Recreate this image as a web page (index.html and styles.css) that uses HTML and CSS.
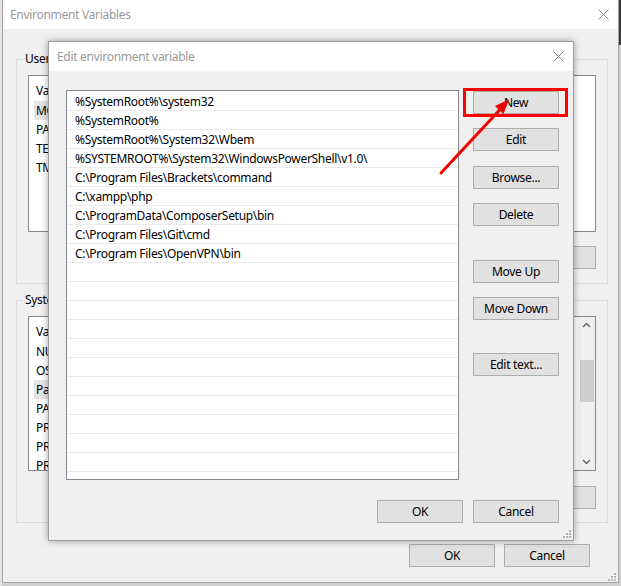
FILE: index.html
```html
<!DOCTYPE html>
<html lang="en">
<head>
<meta charset="utf-8">
<title>Edit environment variable</title>
<link rel="stylesheet" href="styles.css">
</head>
<body>
<div class="desktop">
  <div class="win env">
    <div class="titlebar">
      <span class="title">Environment Variables</span>
      <svg class="close" width="11" height="11" viewBox="0 0 11 11"><path d="M0.5 0.5 L10.5 10.5 M10.5 0.5 L0.5 10.5" stroke="#8a8a8a" stroke-width="1" fill="none"/></svg>
    </div>
    <div class="env-body">
      <fieldset class="group">
        <legend>User variables for admin</legend>
        <div class="vlist user">
          <div class="vhead">Variable</div>
          <div class="vrow sel">MOZ_PLUGIN_PATH</div>
          <div class="vrow">PATH</div>
          <div class="vrow">TEMP</div>
          <div class="vrow">TMP</div>
        </div>
        <div class="btnrow">
          <button class="btn">New...</button>
          <button class="btn">Edit...</button>
          <button class="btn">Delete</button>
        </div>
      </fieldset>
      <fieldset class="group sys">
        <legend>System variables</legend>
        <div class="vlist system">
          <div class="vcontent">
            <div class="vhead">Variable</div>
            <div class="vrow">NUMBER_OF_PROCESSORS</div>
            <div class="vrow">OS</div>
            <div class="vrow sel">Path</div>
            <div class="vrow">PATHEXT</div>
            <div class="vrow">PROCESSOR_ARCHITECTURE</div>
            <div class="vrow">PROCESSOR_IDENTIFIER</div>
            <div class="vrow">PROCESSOR_LEVEL</div>
          </div>
          <div class="scrollbar">
            <svg width="17" height="17" viewBox="0 0 17 17"><path d="M5 10 L8.5 6.5 L12 10" stroke="#606060" stroke-width="1.3" fill="none"/></svg>
            <div class="track"><div class="thumb"></div></div>
            <svg width="17" height="17" viewBox="0 0 17 17"><path d="M5 7 L8.5 10.5 L12 7" stroke="#606060" stroke-width="1.3" fill="none"/></svg>
          </div>
        </div>
        <div class="btnrow sysbtns">
          <button class="btn">New...</button>
          <button class="btn">Edit...</button>
          <button class="btn">Delete</button>
        </div>
      </fieldset>
      <div class="btnrow mainbtns">
        <button class="btn">OK</button>
        <button class="btn">Cancel</button>
      </div>
    </div>
    <svg class="grip env-grip" width="9" height="9" viewBox="0 0 9 9"><g fill="#b4b4b4"><rect x="7" y="1" width="2" height="2"/><rect x="4" y="4" width="2" height="2"/><rect x="7" y="4" width="2" height="2"/><rect x="1" y="7" width="2" height="2"/><rect x="4" y="7" width="2" height="2"/><rect x="7" y="7" width="2" height="2"/></g></svg>
  </div>

  <div class="win dlg">
    <div class="titlebar dlg-title">
      <span class="title">Edit environment variable</span>
      <svg class="close" width="11" height="11" viewBox="0 0 11 11"><path d="M0.5 0.5 L10.5 10.5 M10.5 0.5 L0.5 10.5" stroke="#8a8a8a" stroke-width="1" fill="none"/></svg>
    </div>
    <div class="dlg-body">
      <div class="plist">
        <div class="prow">%SystemRoot%\system32</div>
        <div class="prow">%SystemRoot%</div>
        <div class="prow">%SystemRoot%\System32\Wbem</div>
        <div class="prow">%SYSTEMROOT%\System32\WindowsPowerShell\v1.0\</div>
        <div class="prow">C:\Program Files\Brackets\command</div>
        <div class="prow">C:\xampp\php</div>
        <div class="prow">C:\ProgramData\ComposerSetup\bin</div>
        <div class="prow">C:\Program Files\Git\cmd</div>
        <div class="prow">C:\Program Files\OpenVPN\bin</div>
        <div class="prow"></div>
        <div class="prow"></div>
        <div class="prow"></div>
        <div class="prow"></div>
        <div class="prow"></div>
        <div class="prow"></div>
        <div class="prow"></div>
        <div class="prow"></div>
        <div class="prow"></div>
        <div class="prow"></div>
        <div class="prow"></div>
      </div>
      <div class="side">
        <button class="btn first">New</button>
        <button class="btn">Edit</button>
        <button class="btn g15">Browse...</button>
        <button class="btn">Delete</button>
        <button class="btn g34">Move Up</button>
        <button class="btn">Move Down</button>
        <button class="btn g33">Edit text...</button>
      </div>
      <div class="footer">
        <button class="btn">OK</button>
        <button class="btn">Cancel</button>
      </div>
    </div>
    <svg class="grip dlg-grip" width="9" height="9" viewBox="0 0 9 9"><g fill="#b4b4b4"><rect x="7" y="1" width="2" height="2"/><rect x="4" y="4" width="2" height="2"/><rect x="7" y="4" width="2" height="2"/><rect x="1" y="7" width="2" height="2"/><rect x="4" y="7" width="2" height="2"/><rect x="7" y="7" width="2" height="2"/></g></svg>
  </div>

  <svg class="annot" width="621" height="586" viewBox="0 0 621 586">
    <rect x="464.5" y="89.5" width="102" height="26" fill="none" stroke="#ff0000" stroke-width="3"/>
    <line x1="441" y1="173" x2="501" y2="108.5" stroke="#f00000" stroke-width="3" stroke-linecap="round"/>
    <polygon points="509,99.5 503.5,114 495,106" fill="#f00000"/>
  </svg>
</div>
</body>
</html>
```
FILE: styles.css
```css
* { box-sizing: border-box; }

html, body {
  margin: 0;
  padding: 0;
}

body {
  width: 621px;
  height: 586px;
  overflow: hidden;
  background: linear-gradient(to bottom, #3a3a3a 0, #3a3a3a 45px, #cfcfcf 45px);
  font-family: "Noto Sans", "Segoe UI", sans-serif;
  font-size: 12px;
  letter-spacing: -0.3px;
  color: #000;
}

.desktop {
  position: relative;
  width: 621px;
  height: 586px;
  background: linear-gradient(to right, #e4e4e4 0, #e4e4e4 2px, transparent 2px);
}

.win {
  position: absolute;
  background: #f0f0f0;
  border: 1px solid #a3a3a3;
  display: flex;
  flex-direction: column;
}

.env {
  left: 2px;
  top: -1px;
  width: 617px;
  height: 584px;
}

.titlebar {
  height: 29px;
  flex: none;
  background: #fff;
  display: flex;
  align-items: center;
  justify-content: space-between;
  padding: 0 9px 0 7px;
}

.title {
  color: #999;
  font-size: 12px;
  line-height: 16px;
}

.close { display: block; }

.env-body {
  padding: 22px 10px 0 13px;
  display: flex;
  flex-direction: column;
}

.group {
  margin: 0;
  min-width: 0;
  border: 1px solid #dcdcdc;
  padding: 0 11px 14px 11px;
}

.group legend {
  margin-left: -5px;
  padding: 0 2px;
  line-height: 16px;
  font-size: 12px;
}

.group.sys {
  margin-top: 8px;
  padding-bottom: 13px;
}

.vlist {
  margin-top: 8px;
  height: 157px;
  background: #fff;
  border: 1px solid #828790;
  padding: 5px 0 0 5px;
  overflow: hidden;
}

.vlist.system {
  height: 155px;
  margin-top: 8px;
  display: flex;
  padding: 0;
}

.vcontent {
  flex: 1;
  padding: 5px 0 0 5px;
  overflow: hidden;
}

.vhead {
  height: 20px;
  line-height: 20px;
  padding-left: 2px;
  white-space: nowrap;
}

.vrow {
  height: 19px;
  line-height: 19px;
  padding-left: 2px;
  white-space: nowrap;
  width: 220px;
}

.vrow.sel { background: #e5e5e5; }

.scrollbar {
  width: 17px;
  flex: none;
  background: #f0f0f0;
  display: flex;
  flex-direction: column;
}

.scrollbar svg { display: block; flex: none; }

.track {
  flex: 1;
  padding: 26px 1px 0 2px;
}

.thumb {
  height: 42px;
  background: #cdcdcd;
}

.btnrow {
  display: flex;
  justify-content: flex-end;
  gap: 10px;
  margin-top: 14px;
}

.sysbtns { margin-top: 15px; }

.mainbtns {
  margin-top: 21px;
  margin-right: 18px;
  gap: 9px;
}

.btn {
  width: 86px;
  height: 23px;
  padding: 0;
  margin: 0;
  background: #e1e1e1;
  border: 1px solid #adadad;
  border-radius: 0;
  font-family: "Noto Sans", "Segoe UI", sans-serif;
  font-size: 12px;
  letter-spacing: -0.3px;
  color: #000;
  line-height: 20px;
}

.grip {
  position: absolute;
  display: block;
}

.env-grip { right: 2px; bottom: 1px; }
.dlg-grip { right: 2px; bottom: 2px; }

.dlg {
  left: 48px;
  top: 41px;
  width: 526px;
  height: 500px;
  border-color: #9c9c9c;
  box-shadow: 0 0 7px rgba(0, 0, 0, 0.35);
}

.dlg-title {
  padding: 0 9px 0 8px;
}

.dlg-body {
  display: grid;
  grid-template-columns: 393px 86px;
  column-gap: 14px;
  padding: 19px 13px 0 17px;
}

.plist {
  height: 390px;
  background: #fff;
  border: 1px solid #828790;
  padding-top: 1px;
  overflow: hidden;
}

.prow {
  height: 19px;
  line-height: 18px;
  padding: 1px 0 0 8px;
  border-bottom: 1px solid #ebebeb;
  white-space: nowrap;
}

.side {
  display: flex;
  flex-direction: column;
  gap: 14px;
}

.side .first { margin-top: 1px; }
.side .g15 { margin-top: 1px; }
.side .g34 { margin-top: 20px; }
.side .g33 { margin-top: 19px; }

.footer {
  grid-column: 1 / 3;
  display: flex;
  justify-content: flex-end;
  gap: 10px;
  margin-top: 20px;
}

.annot {
  position: absolute;
  left: 0;
  top: 0;
  pointer-events: none;
}
```
